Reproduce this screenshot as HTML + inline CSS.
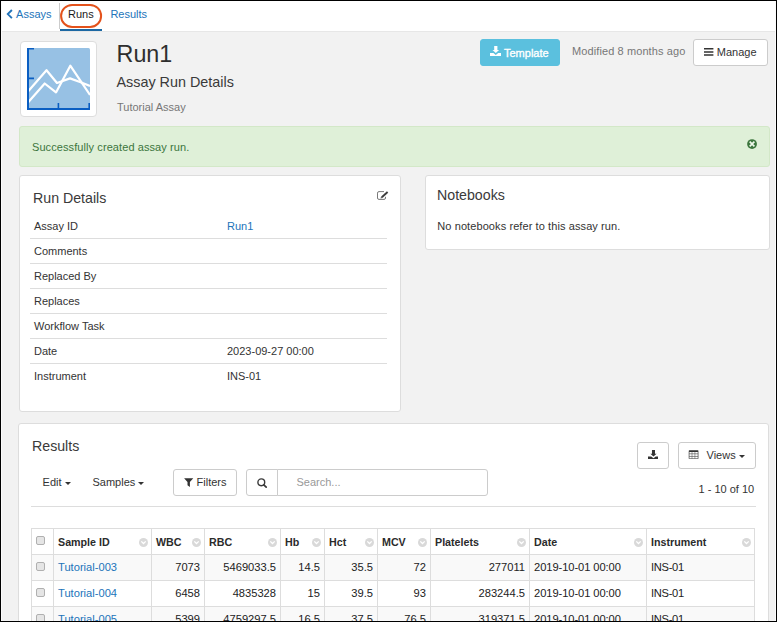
<!DOCTYPE html>
<html lang="en">
<head>
<meta charset="utf-8">
<title>Run1 - Assay Run Details</title>
<style>
html,body{margin:0;padding:0;}
body{width:777px;height:622px;overflow:hidden;background:#f2f2f2;font-family:"Liberation Sans",Arial,sans-serif;font-size:11px;color:#333;position:relative;}
.abs{position:absolute;}
#frame{position:absolute;left:0;top:0;width:775px;height:620px;border:1px solid #000;z-index:50;pointer-events:none;box-shadow:inset 1px 0 0 #fbfbfb, inset -1px 0 0 #fbfbfb;}
#nav{position:absolute;left:0;top:0;width:777px;height:31px;background:#fff;border-bottom:1px solid #e7e7e7;}
#nav a{position:absolute;top:7px;font-size:11px;line-height:14px;color:#2274ba;text-decoration:none;white-space:nowrap;}
#nav .sep{position:absolute;left:59px;top:3px;width:1px;height:26px;background:#ccc;}
#nav .ul{position:absolute;left:60px;top:29px;width:42px;height:2px;background:#1c68a3;}
.panel{position:absolute;background:#fff;border:1px solid #ddd;border-radius:3px;box-sizing:border-box;}
.btn{position:absolute;box-sizing:border-box;border:1px solid #ccc;border-radius:3px;background:#fff;color:#333;font-size:11px;line-height:14px;white-space:nowrap;}
.t{position:absolute;white-space:nowrap;line-height:14px;}
.h{font-size:14.2px;line-height:18px;color:#3a3a3a;}
.hl{position:absolute;height:1px;background:#ddd;}
.caret{display:inline-block;width:0;height:0;border-left:3px solid transparent;border-right:3px solid transparent;border-top:3px solid #333;vertical-align:middle;margin-left:3px;}
table.grid{position:absolute;left:31px;top:528px;border-collapse:collapse;table-layout:fixed;width:724px;font-size:11.15px;color:#222;}
table.grid td,table.grid th{border:1px solid #ddd;height:26px;padding:0 4px 2px 4px;box-sizing:border-box;white-space:nowrap;overflow:hidden;text-align:left;font-weight:normal;position:relative;}
table.grid th{font-weight:bold;font-size:10.7px;padding-bottom:0;color:#2b2b2b;}
table.grid td.n{text-align:right;}
table.grid td.i{letter-spacing:-0.3px;}
table.grid td.d{letter-spacing:-0.07px;}
table.grid tr.odd td{background:#f9f9f9;}
table.grid a{color:#2274ba;text-decoration:none;}
.cb{position:absolute;left:4px;top:7px;width:7px;height:7px;border:1px solid #b0b0b0;border-radius:2px;background:#e5e5e5;}
.dd{position:absolute;right:3.2px;top:9px;}
</style>
</head>
<body>
<div id="nav">
  <svg class="abs" style="left:5.4px;top:8px;" width="10" height="12" viewBox="0 0 10 12"><path d="M6.9,2 L2.8,6.1 L6.9,10.2" fill="none" stroke="#2273b9" stroke-width="1.9"/></svg>
  <a href="#" style="left:16.1px;">Assays</a>
  <div class="sep"></div>
  <a href="#" style="left:68px;color:#1a1a1a;">Runs</a>
  <div class="ul"></div>
  <a href="#" style="left:110.4px;">Results</a>
  <svg class="abs" style="left:59px;top:2px;" width="46" height="28" viewBox="0 0 46 28"><rect x="2.1" y="2.9" width="40" height="22" rx="11" ry="11" fill="none" stroke="#e4521b" stroke-width="2"/></svg>
</div>

<!-- header -->
<div class="abs" style="left:20px;top:41px;width:75px;height:74px;background:#fff;border:1px solid #ddd;border-radius:4px;"></div>
<svg class="abs" style="left:27px;top:48px;" width="63" height="62" viewBox="0 0 63 62">
<rect x="0" y="0" width="63" height="62" rx="1.5" fill="#97c1e4"/>
<polyline points="1,43.5 19.5,22.2 30,35 43,30.4 53,34 63,38" fill="none" stroke="#fff" stroke-width="2.2" stroke-linejoin="round"/>
<polyline points="1,54.5 17.7,35.5 29,44.4 43.3,17.7 63,47" fill="none" stroke="#fff" stroke-width="2.2" stroke-linejoin="round"/>
<path d="M1,0 V61 H63" fill="none" stroke="#0a5ec2" stroke-width="2"/>
<path d="M0,0.8 H7 M0,30.4 H7" fill="none" stroke="#0a5ec2" stroke-width="1.6"/>
<path d="M31.4,55 V61 M62.2,55 V62" fill="none" stroke="#0a5ec2" stroke-width="1.6"/>
</svg>
<div class="t" style="left:116.6px;top:38px;font-size:23.3px;line-height:32px;color:#2e2e2e;">Run1</div>
<div class="t h" style="left:116.4px;top:73px;font-size:14.4px;">Assay Run Details</div>
<div class="t" style="left:117px;top:100px;color:#777;">Tutorial Assay</div>

<div class="btn" style="left:480px;top:39px;width:80px;height:27px;background:#5bc0de;border-color:#5bc0de;color:#fff;"><svg class="abs" style="left:9px;top:6px;" width="11" height="10" viewBox="0 0 11 10"><path d="M4.2,0 H7.4 V4.1 H9.1 L5.8,7.1 L2.5,4.1 H4.2 Z" fill="#fff"/><path d="M0,7 H3.4 L5.8,8.9 L8.2,7 H11 V10 H0 Z" fill="#fff"/></svg><span class="t" style="left:23px;top:5.5px;-webkit-text-stroke:0.35px #fff;">Template</span></div>
<div class="t" style="left:572px;top:44px;color:#777;letter-spacing:0.1px;">Modified 8 months ago</div>
<div class="btn" style="left:693px;top:39px;width:75px;height:27px;"><svg class="abs" style="left:10px;top:8px;" width="10" height="9" viewBox="0 0 10 9"><path d="M0,0.85 H9.4 M0,3.95 H9.4 M0,7.05 H9.4" stroke="#333" stroke-width="1.5"/></svg><span class="t" style="left:22.8px;top:5px;">Manage</span></div>

<!-- alert -->
<div class="abs" style="left:19px;top:126px;width:749px;height:39px;background:#dff0d8;border:1px solid #d3e8c8;border-radius:3px;"></div>
<div class="t" style="left:32px;top:140px;color:#3c763d;letter-spacing:0.085px;">Successfully created assay run.</div>

<svg class="abs" style="left:746px;top:138px;" width="12" height="12" viewBox="0 0 12 12"><circle cx="6.05" cy="6.05" r="4.9" fill="#3c763d"/><path d="M3.7,3.7 L8.4,8.4 M8.4,3.7 L3.7,8.4" stroke="#eef8ea" stroke-width="1.7"/></svg>

<!-- run details -->
<div class="panel" style="left:19px;top:175px;width:382px;height:237px;"></div>
<div class="t h" style="left:33px;top:189px;">Run Details</div>
<svg class="abs" style="left:376px;top:190px;" width="14" height="11" viewBox="0 0 14 11"><path d="M8,1.6 H3 Q1.5,1.6 1.5,3.1 V8 Q1.5,9.4 3,9.4 H8 Q9.5,9.4 9.5,8 V6.8" fill="none" stroke="#6a6a6a" stroke-width="0.9"/><path d="M5.8,7.2 L11.6,2" stroke="#3c3c3c" stroke-width="1.9"/><path d="M4.5,8.5 L5.1,6.5 L6.5,7.9 Z" fill="#555"/></svg>
<div class="t" style="left:34px;top:219px;">Assay ID</div><div class="t" style="left:227px;top:219px;color:#2274ba;">Run1</div>
<div class="hl" style="left:30px;top:238px;width:357px;"></div>
<div class="t" style="left:34px;top:244px;">Comments</div>
<div class="hl" style="left:30px;top:263px;width:357px;"></div>
<div class="t" style="left:34px;top:269px;">Replaced By</div>
<div class="hl" style="left:30px;top:288px;width:357px;"></div>
<div class="t" style="left:34px;top:294px;">Replaces</div>
<div class="hl" style="left:30px;top:313px;width:357px;"></div>
<div class="t" style="left:34px;top:319px;">Workflow Task</div>
<div class="hl" style="left:30px;top:338px;width:357px;"></div>
<div class="t" style="left:34px;top:344px;">Date</div><div class="t" style="left:227px;top:344px;">2023-09-27 00:00</div>
<div class="hl" style="left:30px;top:363px;width:357px;"></div>
<div class="t" style="left:34px;top:369px;">Instrument</div><div class="t" style="left:227px;top:369px;">INS-01</div>

<!-- notebooks -->
<div class="panel" style="left:425px;top:175px;width:345px;height:75px;"></div>
<div class="t h" style="left:437px;top:186px;">Notebooks</div>
<div class="t" style="left:437.3px;top:219px;letter-spacing:0.09px;">No notebooks refer to this assay run.</div>

<!-- results -->
<div class="panel" style="left:18px;top:423px;width:751px;height:220px;"></div>
<div class="t h" style="left:32px;top:437px;">Results</div>
<div class="t" style="left:42.6px;top:475px;">Edit<span class="caret"></span></div>
<div class="t" style="left:92.5px;top:475px;">Samples<span class="caret"></span></div>
<div class="btn" style="left:173px;top:469px;width:64px;height:27px;"><svg class="abs" style="left:10px;top:8px;" width="10" height="10" viewBox="0 0 10 10"><path d="M0.1,0.2 H9.3 L5.9,4 V8.9 L3.5,7.3 V4 Z" fill="#333"/></svg><span class="t" style="left:22.6px;top:5px;">Filters</span></div>
<div class="btn" style="left:246px;top:469px;width:32px;height:27px;border-radius:3px 0 0 3px;"><svg class="abs" style="left:9px;top:6px;" width="13" height="13" viewBox="0 0 13 13"><circle cx="5.3" cy="6.3" r="3.4" fill="none" stroke="#3a3a3a" stroke-width="1.4"/><path d="M7.8,8.8 L10.2,11.2" stroke="#3a3a3a" stroke-width="1.7" stroke-linecap="round"/></svg></div>
<div class="btn" style="left:277px;top:469px;width:211px;height:27px;border-radius:0 3px 3px 0;"><span class="t" style="left:18.5px;top:5px;color:#999;">Search...</span></div>
<div class="btn" style="left:637px;top:442px;width:32px;height:27px;"><svg class="abs" style="left:10px;top:6.8px;" width="10.4" height="9.3" viewBox="0 0 11 10" preserveAspectRatio="none"><path d="M4.2,0 H7.4 V4.1 H9.1 L5.8,7.1 L2.5,4.1 H4.2 Z" fill="#333"/><path d="M0,7 H3.4 L5.8,8.9 L8.2,7 H11 V10 H0 Z" fill="#333"/></svg></div>
<div class="btn" style="left:678px;top:442px;width:78px;height:27px;"><svg class="abs" style="left:9px;top:6.9px;" width="11.5" height="9.5" viewBox="0 0 11.5 9.5"><rect x="0.8" y="0.2" width="9.6" height="1.7" rx="0.6" fill="#333"/><path d="M1.1,1.5 V8.7 H10.1 V1.5" fill="none" stroke="#444" stroke-width="0.7"/><path d="M1.1,3.8 H10.1 M1.1,6.45 H10.1" stroke="#444" stroke-width="0.6"/><path d="M4,2 V8.7 M6.9,2 V8.7" stroke="#555" stroke-width="0.55"/></svg><span class="t" style="left:27.5px;top:5px;">Views<span class="caret"></span></span></div>
<div class="t" style="right:22.8px;top:482px;color:#333;">1 - 10 of 10</div>
<div class="hl" style="left:31px;top:506px;width:725px;"></div>

<table class="grid">
<colgroup><col style="width:22px"><col style="width:98px"><col style="width:53px"><col style="width:76px"><col style="width:44px"><col style="width:53px"><col style="width:53px"><col style="width:99px"><col style="width:117px"><col style="width:108px"></colgroup>
<tr><th><span class="cb"></span></th><th>Sample ID<svg class="dd" width="9" height="9" viewBox="0 0 9 9"><circle cx="4.5" cy="4.5" r="4.5" fill="#d9d9d9"/><path d="M2.3,3.4 L4.5,5.5 L6.7,3.4" fill="none" stroke="#fff" stroke-width="1.3"/></svg></th><th>WBC<svg class="dd" width="9" height="9" viewBox="0 0 9 9"><circle cx="4.5" cy="4.5" r="4.5" fill="#d9d9d9"/><path d="M2.3,3.4 L4.5,5.5 L6.7,3.4" fill="none" stroke="#fff" stroke-width="1.3"/></svg></th><th>RBC<svg class="dd" width="9" height="9" viewBox="0 0 9 9"><circle cx="4.5" cy="4.5" r="4.5" fill="#d9d9d9"/><path d="M2.3,3.4 L4.5,5.5 L6.7,3.4" fill="none" stroke="#fff" stroke-width="1.3"/></svg></th><th>Hb<svg class="dd" width="9" height="9" viewBox="0 0 9 9"><circle cx="4.5" cy="4.5" r="4.5" fill="#d9d9d9"/><path d="M2.3,3.4 L4.5,5.5 L6.7,3.4" fill="none" stroke="#fff" stroke-width="1.3"/></svg></th><th>Hct<svg class="dd" width="9" height="9" viewBox="0 0 9 9"><circle cx="4.5" cy="4.5" r="4.5" fill="#d9d9d9"/><path d="M2.3,3.4 L4.5,5.5 L6.7,3.4" fill="none" stroke="#fff" stroke-width="1.3"/></svg></th><th>MCV<svg class="dd" width="9" height="9" viewBox="0 0 9 9"><circle cx="4.5" cy="4.5" r="4.5" fill="#d9d9d9"/><path d="M2.3,3.4 L4.5,5.5 L6.7,3.4" fill="none" stroke="#fff" stroke-width="1.3"/></svg></th><th>Platelets<svg class="dd" width="9" height="9" viewBox="0 0 9 9"><circle cx="4.5" cy="4.5" r="4.5" fill="#d9d9d9"/><path d="M2.3,3.4 L4.5,5.5 L6.7,3.4" fill="none" stroke="#fff" stroke-width="1.3"/></svg></th><th>Date<svg class="dd" width="9" height="9" viewBox="0 0 9 9"><circle cx="4.5" cy="4.5" r="4.5" fill="#d9d9d9"/><path d="M2.3,3.4 L4.5,5.5 L6.7,3.4" fill="none" stroke="#fff" stroke-width="1.3"/></svg></th><th>Instrument<svg class="dd" width="9" height="9" viewBox="0 0 9 9"><circle cx="4.5" cy="4.5" r="4.5" fill="#d9d9d9"/><path d="M2.3,3.4 L4.5,5.5 L6.7,3.4" fill="none" stroke="#fff" stroke-width="1.3"/></svg></th></tr>
<tr class="odd"><td><span class="cb"></span></td><td><a href="#">Tutorial-003</a></td><td class="n">7073</td><td class="n">5469033.5</td><td class="n">14.5</td><td class="n">35.5</td><td class="n">72</td><td class="n">277011</td><td class="d">2019-10-01 00:00</td><td class="i">INS-01</td></tr>
<tr><td><span class="cb"></span></td><td><a href="#">Tutorial-004</a></td><td class="n">6458</td><td class="n">4835328</td><td class="n">15</td><td class="n">39.5</td><td class="n">93</td><td class="n">283244.5</td><td class="d">2019-10-01 00:00</td><td class="i">INS-01</td></tr>
<tr class="odd"><td><span class="cb"></span></td><td><a href="#">Tutorial-005</a></td><td class="n">5399</td><td class="n">4759297.5</td><td class="n">16.5</td><td class="n">37.5</td><td class="n">76.5</td><td class="n">319371.5</td><td class="d">2019-10-01 00:00</td><td class="i">INS-01</td></tr>
</table>

<div id="frame"></div>
</body>
</html>
